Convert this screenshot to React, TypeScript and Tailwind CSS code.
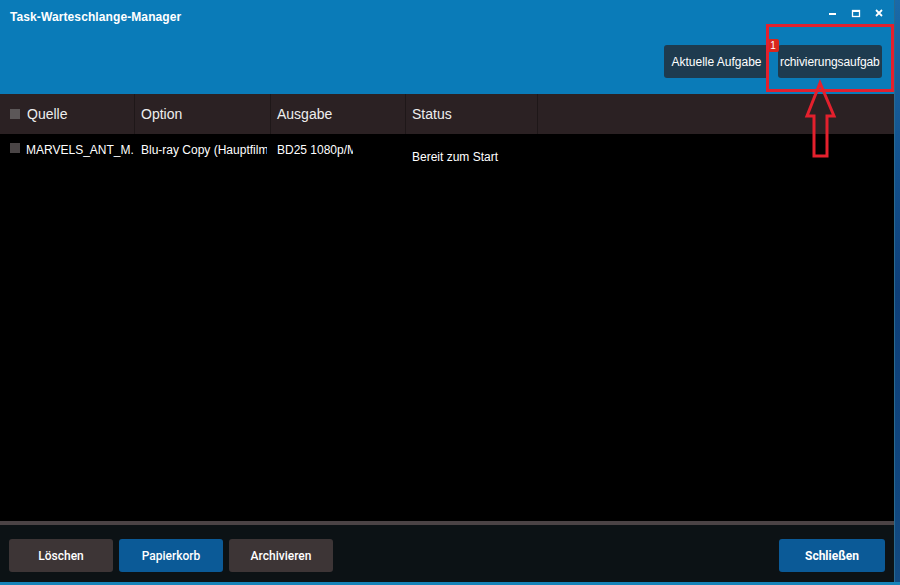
import React from "react";

const cols = [
  { label: "Quelle", w: "w-[135px]", check: true },
  { label: "Option", w: "w-[136px]" },
  { label: "Ausgabe", w: "w-[135px]" },
  { label: "Status", w: "w-[132px]" },
];

export default function App() {
  return (
    <div className="w-[900px] h-[585px] flex flex-col overflow-hidden bg-[#0b2a4a] relative" style={{ fontFamily: '"Liberation Sans", Arial, sans-serif' }}>
      <div className="flex h-[582px]">
        <div className="w-[895px] flex flex-col border-r border-[#2a6a8e]">
          {/* Title bar */}
          <div className="h-[94px] bg-[#0a7bb8] flex flex-col px-[10px]">
            <div className="flex items-center justify-between h-[32px]">
              <span className="text-white font-bold text-[12px] tracking-[0.1px] mt-[1px]">Task-Warteschlange-Manager</span>
              <div className="flex items-center gap-[13px] self-start mt-[8px] text-white">
                <svg width="10" height="10" viewBox="0 0 10 10"><rect x="1" y="5" width="7" height="2" fill="white" /></svg>
                <svg width="10" height="10" viewBox="0 0 10 10"><rect x="1.5" y="2.5" width="7" height="6" fill="none" stroke="white" strokeWidth="1.3" /><rect x="1.5" y="2.5" width="7" height="1.5" fill="white" /></svg>
                <svg width="10" height="10" viewBox="0 0 10 10"><path d="M2 2 L8 8 M8 2 L2 8" stroke="white" strokeWidth="1.8" /></svg>
              </div>
            </div>
            <div className="flex justify-end gap-[9px] mt-[13px] pr-[2px]">
              <div className="w-[105px] h-[33px] rounded-[3px] bg-[#1e3b4f] text-white text-[12px] flex items-center justify-center whitespace-nowrap overflow-hidden">Aktuelle Aufgabe</div>
              <div className="w-[104px] h-[33px] rounded-[3px] bg-[#1e3b4f] text-white text-[12px] flex items-center justify-start pl-[2px] whitespace-nowrap overflow-hidden">
                <span className="tracking-[-0.1px]">rchivierungsaufgab</span>
              </div>
            </div>
          </div>
          {/* Table header */}
          <div className="h-[40px] bg-[#2b2123] flex text-[#eee] text-[14px]">
            {cols.map((c) => (
              <div key={c.label} className={`${c.w} border-r border-[#1e1718] flex items-center ${c.check ? "pl-[10px]" : "pl-[6px]"}`}>
                {c.check && <span className="w-[10px] h-[10px] bg-[#5c5758] mr-[7px]" />}
                {c.label}
              </div>
            ))}
            <div className="flex-1" />
          </div>
          {/* Body */}
          <div className="flex-1 bg-black text-white text-[12px]">
            <div className="flex h-[42px]">
              <div className="w-[135px] flex items-start pt-[7px] pl-[10px] overflow-hidden whitespace-nowrap">
                <span className="w-[10px] h-[10px] bg-[#4a4546] mr-[6px] mt-[2px] shrink-0" />
                <span>MARVELS_ANT_M.</span>
              </div>
              <div className="w-[136px] pt-[7px] pl-[6px] whitespace-nowrap">
                <span className="inline-block w-[126px] overflow-hidden align-top">Blu-ray Copy (Hauptfilm)</span>
              </div>
              <div className="w-[135px] pt-[7px] pl-[6px] whitespace-nowrap">
                <span className="inline-block w-[76px] overflow-hidden align-top">BD25 1080p/MKV</span>
              </div>
              <div className="w-[132px] pt-[14px] pl-[6px] whitespace-nowrap">Bereit zum Start</div>
            </div>
          </div>
          <div className="h-[4px] bg-[#4b4345]" />
          {/* Footer */}
          <div className="h-[57px] bg-[#0c1215] flex items-center pt-[4px] px-[9px] text-[12px] text-white" style={{ fontFamily: 'Roboto, "Noto Sans", sans-serif' }}>
            <div className="flex gap-[6px]">
              <div className="w-[104px] h-[33px] rounded-[3px] bg-[#3d3536] flex items-center justify-center font-medium">Löschen</div>
              <div className="w-[104px] h-[33px] rounded-[3px] bg-[#0b5a97] flex items-center justify-center font-medium">Papierkorb</div>
              <div className="w-[104px] h-[33px] rounded-[3px] bg-[#3d3536] flex items-center justify-center font-medium">Archivieren</div>
            </div>
            <div className="flex-1" />
            <div className="w-[106px] h-[33px] rounded-[3px] bg-[#0b5a97] flex items-center justify-center font-bold">Schließen</div>
          </div>
        </div>
        <div className="flex-1 bg-gradient-to-b from-[#1a6aa8] via-[#0e3f78] to-[#124a80]" />
      </div>
      <div className="h-[3px] bg-[#1683b8]" />

      {/* Badge */}
      <div className="absolute left-[767px] top-[39px] w-[12px] h-[13px] bg-[#d9261c] rounded-[2px] text-white text-[10px] flex items-center justify-center">1</div>
      {/* Annotation rectangle */}
      <div className="absolute left-[766px] top-[24px] w-[128px] h-[68px] border-[3px] border-[#e4202d]" />
      {/* Annotation arrow */}
      <svg className="absolute left-0 top-0" width="900" height="585" viewBox="0 0 900 585" style={{ pointerEvents: "none" }}>
        <polygon points="820,83 807,116 814,116 814,156 827,156 827,116 834,116" fill="none" stroke="#e4202d" strokeWidth="3" strokeLinejoin="miter" />
      </svg>
    </div>
  );
}
